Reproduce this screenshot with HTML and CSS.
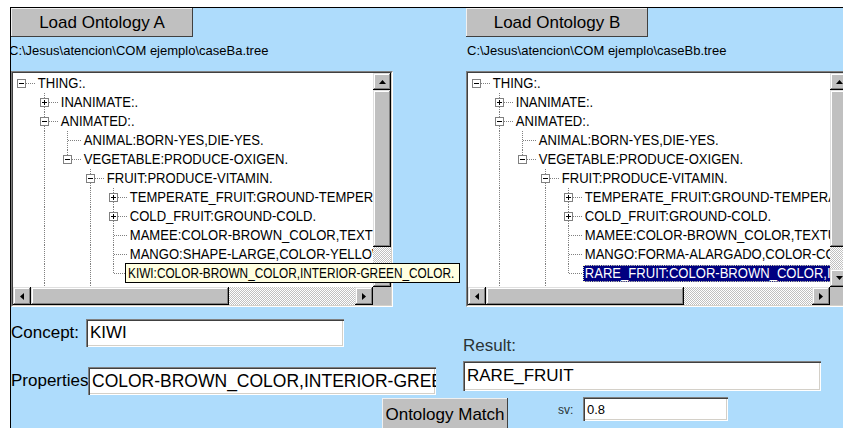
FILE: index.html
```html
<!DOCTYPE html>
<html lang="es">
<head>
<meta charset="utf-8">
<title>Ontology Match</title>
<link rel="stylesheet" href="styles.css">
</head>
<body>
<div class="applet">
  <div class="panes">
    <section class="pane">
      <button class="btn load-btn">Load Ontology A</button>
      <div class="path">C:\Jesus\atencion\COM ejemplo\caseBa.tree</div>
      <div class="tree tree-a">
        <div class="tree-frame">
          <div class="rows">
            <div class="row"><span class="c root"><span class="box minus"></span></span><span class="label">THING:.</span></div>
            <div class="row"><span class="g"></span><span class="c tee"><span class="box plus"></span></span><span class="label">INANIMATE:.</span></div>
            <div class="row"><span class="g"></span><span class="c tee"><span class="box minus"></span></span><span class="label">ANIMATED:.</span></div>
            <div class="row"><span class="g"></span><span class="g pipe"></span><span class="c tee"></span><span class="label">ANIMAL:BORN-YES,DIE-YES.</span></div>
            <div class="row"><span class="g"></span><span class="g pipe"></span><span class="c elbow"><span class="box minus"></span></span><span class="label">VEGETABLE:PRODUCE-OXIGEN.</span></div>
            <div class="row"><span class="g"></span><span class="g pipe"></span><span class="g"></span><span class="c tee"><span class="box minus"></span></span><span class="label">FRUIT:PRODUCE-VITAMIN.</span></div>
            <div class="row"><span class="g"></span><span class="g pipe"></span><span class="g"></span><span class="g pipe"></span><span class="c tee"><span class="box plus"></span></span><span class="label">TEMPERATE_FRUIT:GROUND-TEMPERATE.</span></div>
            <div class="row"><span class="g"></span><span class="g pipe"></span><span class="g"></span><span class="g pipe"></span><span class="c tee"><span class="box plus"></span></span><span class="label">COLD_FRUIT:GROUND-COLD.</span></div>
            <div class="row"><span class="g"></span><span class="g pipe"></span><span class="g"></span><span class="g pipe"></span><span class="c tee"></span><span class="label">MAMEE:COLOR-BROWN_COLOR,TEXTURE-SOFT.</span></div>
            <div class="row"><span class="g"></span><span class="g pipe"></span><span class="g"></span><span class="g pipe"></span><span class="c tee"></span><span class="label">MANGO:SHAPE-LARGE,COLOR-YELLOW_COLOR.</span></div>
            <div class="row"><span class="g"></span><span class="g pipe"></span><span class="g"></span><span class="g pipe"></span><span class="c elbow"></span><span class="label">KIWI:COLOR-BROWN_COLOR,INTERIOR-GREEN_COLOR.</span></div>
            <div class="row"><span class="g"></span><span class="g pipe"></span><span class="g"></span><span class="c tee"><span class="box plus"></span></span><span class="label">LEGUMES:.</span></div>
          </div>
          <div class="vscroll">
            <span class="sb-btn"><svg width="7" height="4" viewBox="0 0 7 4"><polygon points="3.5,0 7,4 0,4" fill="#000"/></svg></span>
            <span class="thumb v-thumb"></span>
            <span class="track"></span>
            <span class="sb-btn"><svg width="7" height="4" viewBox="0 0 7 4"><polygon points="0,0 7,0 3.5,4" fill="#000"/></svg></span>
          </div>
          <div class="hscroll">
            <span class="sb-btn"><svg width="4" height="7" viewBox="0 0 4 7"><polygon points="4,0 4,7 0,3.5" fill="#000"/></svg></span>
            <span class="thumb h-thumb"></span>
            <span class="track"></span>
            <span class="sb-btn"><svg width="4" height="7" viewBox="0 0 4 7"><polygon points="0,0 4,3.5 0,7" fill="#000"/></svg></span>
          </div>
          <div class="corner"></div>
        </div>
      </div>
      <div class="tip"><span class="tip-text">KIWI:COLOR-BROWN_COLOR,INTERIOR-GREEN_COLOR.</span></div>
    </section>

    <section class="pane">
      <button class="btn load-btn">Load Ontology B</button>
      <div class="path path-b">C:\Jesus\atencion\COM ejemplo\caseBb.tree</div>
      <div class="tree tree-b">
        <div class="tree-frame">
          <div class="rows">
            <div class="row"><span class="c root"><span class="box minus"></span></span><span class="label">THING:.</span></div>
            <div class="row"><span class="g"></span><span class="c tee"><span class="box plus"></span></span><span class="label">INANIMATE:.</span></div>
            <div class="row"><span class="g"></span><span class="c tee"><span class="box minus"></span></span><span class="label">ANIMATED:.</span></div>
            <div class="row"><span class="g"></span><span class="g pipe"></span><span class="c tee"></span><span class="label">ANIMAL:BORN-YES,DIE-YES.</span></div>
            <div class="row"><span class="g"></span><span class="g pipe"></span><span class="c elbow"><span class="box minus"></span></span><span class="label">VEGETABLE:PRODUCE-OXIGEN.</span></div>
            <div class="row"><span class="g"></span><span class="g pipe"></span><span class="g"></span><span class="c tee"><span class="box minus"></span></span><span class="label">FRUIT:PRODUCE-VITAMIN.</span></div>
            <div class="row"><span class="g"></span><span class="g pipe"></span><span class="g"></span><span class="g pipe"></span><span class="c tee"><span class="box plus"></span></span><span class="label">TEMPERATE_FRUIT:GROUND-TEMPERATE.</span></div>
            <div class="row"><span class="g"></span><span class="g pipe"></span><span class="g"></span><span class="g pipe"></span><span class="c tee"><span class="box plus"></span></span><span class="label">COLD_FRUIT:GROUND-COLD.</span></div>
            <div class="row"><span class="g"></span><span class="g pipe"></span><span class="g"></span><span class="g pipe"></span><span class="c tee"></span><span class="label">MAMEE:COLOR-BROWN_COLOR,TEXTURE-SOFT.</span></div>
            <div class="row"><span class="g"></span><span class="g pipe"></span><span class="g"></span><span class="g pipe"></span><span class="c tee"></span><span class="label">MANGO:FORMA-ALARGADO,COLOR-COLORADO.</span></div>
            <div class="row"><span class="g"></span><span class="g pipe"></span><span class="g"></span><span class="g pipe"></span><span class="c elbow"></span><span class="label sel">RARE_FRUIT:COLOR-BROWN_COLOR,INTERIOR-GREEN_COLOR.</span></div>
            <div class="row"><span class="g"></span><span class="g pipe"></span><span class="g"></span><span class="c tee"><span class="box plus"></span></span><span class="label">LEGUMES:.</span></div>
          </div>
          <div class="vscroll">
            <span class="sb-btn"><svg width="7" height="4" viewBox="0 0 7 4"><polygon points="3.5,0 7,4 0,4" fill="#000"/></svg></span>
            <span class="thumb v-thumb"></span>
            <span class="track"></span>
            <span class="sb-btn"><svg width="7" height="4" viewBox="0 0 7 4"><polygon points="0,0 7,0 3.5,4" fill="#000"/></svg></span>
          </div>
          <div class="hscroll">
            <span class="sb-btn"><svg width="4" height="7" viewBox="0 0 4 7"><polygon points="4,0 4,7 0,3.5" fill="#000"/></svg></span>
            <span class="thumb h-thumb"></span>
            <span class="track"></span>
            <span class="sb-btn"><svg width="4" height="7" viewBox="0 0 4 7"><polygon points="0,0 4,3.5 0,7" fill="#000"/></svg></span>
          </div>
          <div class="corner"></div>
        </div>
      </div>
    </section>
  </div>

  <div class="lower">
    <div class="form-a">
      <div class="field concept"><span class="field-label">Concept:</span><input class="text-input" type="text" value="KIWI"></div>
      <div class="field props"><span class="field-label">Properties</span><input class="text-input" type="text" value="COLOR-BROWN_COLOR,INTERIOR-GREEN_COLOR."></div>
    </div>
    <div class="form-b">
      <div class="result-label">Result:</div>
      <input class="text-input result" type="text" value="RARE_FRUIT">
    </div>
  </div>

  <div class="actions">
    <button class="btn match-btn">Ontology Match</button>
    <span class="sv-label">sv:</span>
    <input class="text-input sv" type="text" value="0.8">
  </div>
</div>
</body>
</html>
```

FILE: styles.css
```css
html, body {
  overflow: hidden;
}

body {
  margin: 7px 0 0 10px;
  background: #fff;
  font-family: "Liberation Sans", Arial, sans-serif;
}

.applet {
  height: 421px;
  background: #aedcfc;
  border-top: 1px solid #000;
  border-left: 1px solid #000;
  overflow: hidden;
  box-sizing: border-box;
}

/* ---------- ontology panes ---------- */

.panes {
  display: grid;
  grid-template-columns: 382px 384px;
  column-gap: 73px;
  width: 900px;
}

.pane {
  position: relative;
  display: flex;
  flex-direction: column;
  align-items: flex-start;
}

.btn {
  font-family: "Liberation Sans", Arial, sans-serif;
  font-size: 17px;
  color: #000;
  background: #c0c0c0;
  border: 0;
  padding: 0;
  box-shadow: inset -1px -1px #404040, inset 1px 1px #f0f0f0;
}

.load-btn {
  width: 182px;
  height: 29px;
}

.path {
  height: 34px;
  line-height: 28px;
  margin-left: -2px;
  font-size: 13px;
  white-space: nowrap;
  color: #000;
}

.path-b {
  margin-left: 1px;
}

/* ---------- tree view ---------- */

.tree {
  height: 236px;
  box-sizing: border-box;
  border: 1px solid;
  border-color: #808080 #fff #fff #808080;
}

.tree-a { width: 382px; }
.tree-b { width: 384px; }

.tree-frame {
  height: 100%;
  box-sizing: border-box;
  border: 1px solid;
  border-color: #404040 #d4d0c8 #d4d0c8 #404040;
  display: grid;
  grid-template-columns: 1fr 18px;
  grid-template-rows: 1fr 18px;
}

.rows {
  background: #fff;
  overflow: hidden;
  padding-top: 1px;
  font-family: "Liberation Sans", Arial, sans-serif;
  font-size: 14.5px;
  color: #000;
}

.row {
  display: flex;
  align-items: center;
  height: 19px;
  white-space: nowrap;
}

.g, .c {
  flex: none;
  width: 23px;
  height: 19px;
  display: flex;
  align-items: center;
  background-repeat: no-repeat;
}

.pipe {
  background-image: repeating-linear-gradient(to bottom, #808080 0 1px, transparent 1px 2px);
  background-size: 1px 100%;
  background-position: 8px 0;
}

.tee {
  background-image:
    repeating-linear-gradient(to bottom, #808080 0 1px, transparent 1px 2px),
    repeating-linear-gradient(to right, #808080 0 1px, transparent 1px 2px);
  background-size: 1px 100%, 14px 1px;
  background-position: 8px 0, 9px 9px;
}

.elbow {
  background-image:
    repeating-linear-gradient(to bottom, #808080 0 1px, transparent 1px 2px),
    repeating-linear-gradient(to right, #808080 0 1px, transparent 1px 2px);
  background-size: 1px 10px, 14px 1px;
  background-position: 8px 0, 9px 9px;
}

.root {
  background-image: repeating-linear-gradient(to right, #808080 0 1px, transparent 1px 2px);
  background-size: 14px 1px;
  background-position: 9px 9px;
}

.box {
  width: 9px;
  height: 9px;
  margin-left: 4px;
  box-sizing: border-box;
  border: 1px solid #808080;
  background-color: #fff;
  background-repeat: no-repeat;
}

.box.minus {
  background-image: linear-gradient(#000, #000);
  background-size: 5px 1px;
  background-position: center;
}

.box.plus {
  background-image: linear-gradient(#000, #000), linear-gradient(#000, #000);
  background-size: 5px 1px, 1px 5px;
  background-position: center, center;
}

/* the tree font is a narrow face: the regular one is squeezed to its width */
.label {
  display: inline-block;
  padding: 0 2px;
  line-height: 17px;
  transform: scaleX(0.9);
  transform-origin: 0 50%;
}

.label.sel {
  background: #000080;
  color: #fff;
  outline: 1px dotted #ffffc0;
  outline-offset: -1px;
}

/* ---------- scroll bars ---------- */

.vscroll, .hscroll {
  display: flex;
}

.vscroll { flex-direction: column; }

.sb-btn, .thumb {
  flex: none;
  background: #c0c0c0;
  box-shadow: inset -1px -1px #000, inset 1px 1px #dfdfdf, inset -2px -2px #808080, inset 2px 2px #fff;
}

.sb-btn {
  width: 18px;
  height: 18px;
  display: flex;
  align-items: center;
  justify-content: center;
}

.vscroll .sb-btn:first-child { height: 17px; }

.v-thumb { height: 157px; }
.h-thumb { width: 198px; }

.track {
  flex: 1;
  background: repeating-conic-gradient(#c0c0c0 0 25%, #fff 0 50%) 0 0 / 2px 2px;
}

.corner {
  background: #c0c0c0;
}

/* ---------- tooltip over the hovered item ---------- */

.tip {
  position: absolute;
  left: 114px;
  top: 255px;
  width: 335px;
  height: 20px;
  box-sizing: border-box;
  padding: 0 2px;
  border: 1px solid #000;
  background: #ffffe1;
  font-size: 14.5px;
  line-height: 18px;
  white-space: nowrap;
  overflow: hidden;
  color: #000;
}

.tip-text {
  display: inline-block;
  transform: scaleX(0.815);
  transform-origin: 0 50%;
}

/* ---------- concept / result fields ---------- */

.lower {
  display: flex;
  align-items: flex-start;
}

.form-a {
  width: 425px;
  flex: none;
}

.field {
  display: flex;
  align-items: center;
  height: 28px;
}

.concept { margin-top: 12px; }
.props { margin-top: 20px; }

.field-label {
  flex: none;
  font-size: 17px;
  color: #000;
}

.concept .field-label { width: 75px; }
.props .field-label { width: 77px; }

.text-input {
  box-sizing: border-box;
  margin: 0;
  border: 0;
  padding: 0 0 0 4px;
  background: #fff;
  font-family: "Liberation Sans", Arial, sans-serif;
  font-size: 17px;
  color: #000;
  box-shadow: inset 1px 1px #808080, inset 2px 2px #404040, inset -1px -1px #fff, inset -2px -2px #d4d0c8;
  outline: none;
}

.concept .text-input { width: 258px; height: 28px; }
.props .text-input { width: 348px; height: 28px; font-size: 17.5px; }

.form-b {
  margin-left: 27px;
  width: 358px;
}

.result-label {
  margin-top: 31px;
  line-height: 16px;
  font-size: 17px;
  color: #2b3434;
}

.text-input.result {
  margin-top: 7px;
  width: 358px;
  height: 30px;
}

/* ---------- bottom actions ---------- */

.actions {
  display: flex;
  align-items: flex-start;
  padding-top: 2px;
}

.match-btn {
  margin-left: 371px;
  margin-top: 1px;
  width: 126px;
  height: 34px;
}

.sv-label {
  margin-left: 50px;
  width: 25px;
  padding-top: 5px;
  font-size: 12px;
  line-height: 16px;
  color: #2b3434;
}

.text-input.sv {
  width: 145px;
  height: 24px;
  font-size: 13px;
}
```
